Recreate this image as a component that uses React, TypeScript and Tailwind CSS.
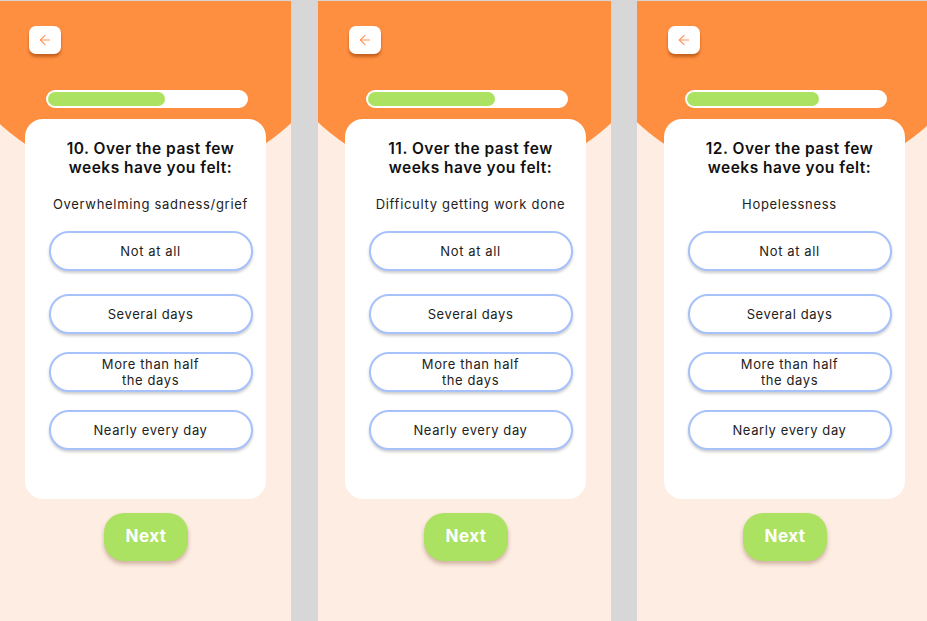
import { ArrowLeft } from "lucide-react";

const screens = [
  { num: 10, item: "Overwhelming sadness/grief", fill: "w-[117px]", gap: "" },
  { num: 11, item: "Difficulty getting work done", fill: "w-[127px]", gap: "ml-[27px]" },
  { num: 12, item: "Hopelessness", fill: "w-[132px]", gap: "ml-[26px]" },
];

const answers = [
  { label: "Not at all", space: "mt-0" },
  { label: "Several days", space: "mt-[23px]" },
  { label: "More than half\nthe days", space: "mt-[18px]" },
  { label: "Nearly every day", space: "mt-[18px]" },
];

function Screen({ num, item, fill, gap }: { num: number; item: string; fill: string; gap: string }) {
  return (
    <div
      className={`${gap} w-[293px] h-[620px] shrink-0 flex flex-col bg-[radial-gradient(circle_at_147px_-35px,#ff8f40_214px,#fdede2_215px)]`}
    >
      {/* back */}
      <button className="ml-[31px] mt-[25px] w-[32px] h-[28px] rounded-[7px] bg-white flex items-center justify-center shadow-[0_3px_3px_rgba(150,60,0,0.55)]">
        <ArrowLeft size={16} strokeWidth={1.6} className="text-[#ff9450]" />
      </button>

      {/* progress */}
      <div className="ml-[48px] mt-[36px] w-[202px] h-[18px] rounded-full bg-white p-[2px]">
        <div className={`${fill} h-full rounded-full bg-[#abe261]`} />
      </div>

      {/* card */}
      <div className="ml-[27px] mt-[11px] w-[241px] h-[380px] rounded-[18px] bg-white flex flex-col items-center pt-[20px] pl-[10px]">
        <h2 className="text-[15.5px] leading-[19px] font-semibold tracking-[0.5px] text-[#111] text-center">
          {num}. Over the past few
          <br />
          weeks have you felt:
        </h2>
        <p className="mt-[19px] text-[13px] leading-[16px] tracking-[0.7px] text-[#222]">{item}</p>
        <div className="mt-[19px] w-[204px] flex flex-col">
          {answers.map((a) => (
            <div
              key={a.label}
              className={`${a.space} h-[40px] rounded-full border-2 border-[#a7c2fa] bg-white flex items-center justify-center text-center whitespace-pre-line text-[13px] leading-[16px] tracking-[0.6px] text-[#222] shadow-[0_2px_3px_rgba(0,0,0,0.2)]`}
            >
              {a.label}
            </div>
          ))}
        </div>
      </div>

      {/* next */}
      <button className="ml-[106px] mt-[14px] w-[84px] h-[48px] rounded-[20px] bg-[#abe261] text-white font-bold text-[17px] tracking-[0.5px] shadow-[0_3px_4px_rgba(120,70,40,0.35)]">
        Next
      </button>
    </div>
  );
}

export default function App() {
  return (
    <div className="w-[927px] h-[621px] overflow-hidden bg-[#d7d7d7] pt-[1px] font-['Inter',sans-serif]">
      <div className="flex -ml-[2px]">
        {screens.map((s) => (
          <Screen key={s.num} {...s} />
        ))}
      </div>
    </div>
  );
}
